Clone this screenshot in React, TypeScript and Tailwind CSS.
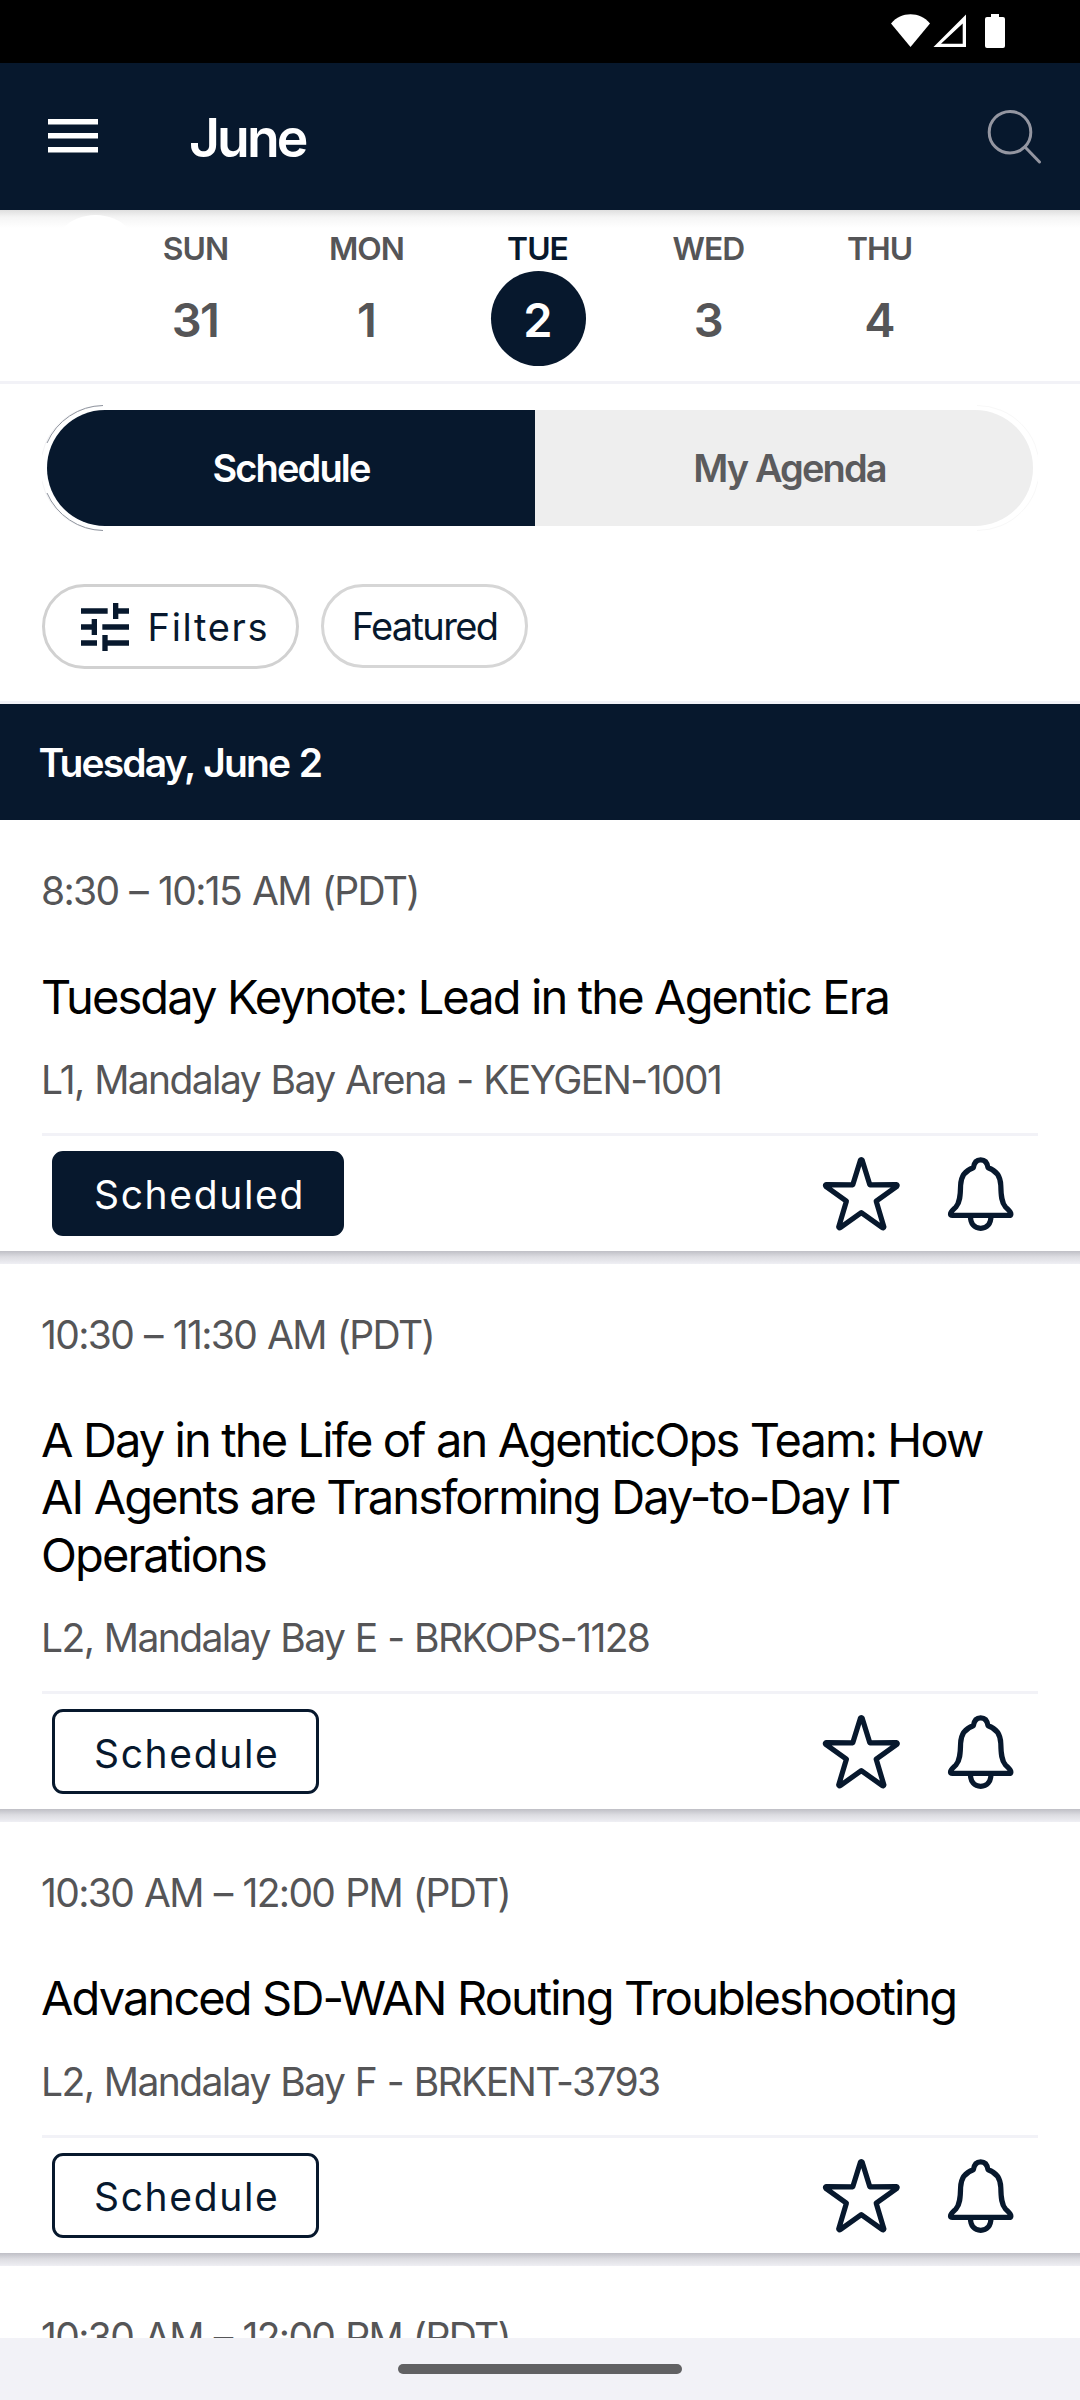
import React, { useState } from 'react';

interface Session { time: string; title: string; place: string; scheduled?: boolean }

const DAYS = [
    { name: 'SUN', date: 31 },
    { name: 'MON', date: 1 },
    { name: 'TUE', date: 2 },
    { name: 'WED', date: 3 },
    { name: 'THU', date: 4 },
];

const SESSIONS: Session[] = [
    { time: '8:30 – 10:15 AM (PDT)', title: 'Tuesday Keynote: Lead in the Agentic Era', place: 'L1, Mandalay Bay Arena - KEYGEN-1001', scheduled: true },
    { time: '10:30 – 11:30 AM (PDT)', title: 'A Day in the Life of an AgenticOps Team: How AI Agents are Transforming Day-to-Day IT Operations', place: 'L2, Mandalay Bay E - BRKOPS-1128' },
    { time: '10:30 AM – 12:00 PM (PDT)', title: 'Advanced SD-WAN Routing Troubleshooting', place: 'L2, Mandalay Bay F - BRKENT-3793' },
    { time: '10:30 AM – 12:00 PM (PDT)', title: '', place: '' },
];

const StatusBar = () => (
    <div className="h-[63px] shrink-0 bg-black flex justify-end pr-[75px] pt-[14px]">
        <svg width="114" height="34" viewBox="0 0 114 34" fill="#fff">
            <path d="M0 9.5C5.5 3 12 .2 19.5 .2S33.500 3 39 9.500L19.500 33Z" />
            <path d="M75 .5V33H42.500ZM71.700 9.500L50 29.700H71.700Z" fillRule="evenodd" />
            <path d="M100 0h8v3h4a2 2 0 0 1 2 2v27a2 2 0 0 1-2 2H96a2 2 0 0 1-2-2V5a2 2 0 0 1 2-2h4Z" />
        </svg>
    </div>
);

const Header = () => (
    <header className="h-[147px] shrink-0 bg-[#07182d] flex items-center pl-[48px] pr-[38px]">
        <svg className="-mt-px" width="50" height="34" viewBox="0 0 50 34" fill="#fff">
            <path d="M0 0h50v5.600H0ZM0 14h50v5.600H0ZM0 28h50v5.600H0Z" />
        </svg>
        <h1 className="ml-[91px] pt-[3px] text-[53.500px] font-semibold text-white tracking-[-0.055em]">June</h1>
        <svg className="ml-auto" width="55" height="55" viewBox="0 0 55 55" fill="none" stroke="#9496a1" strokeWidth="3" strokeLinecap="round">
            <circle cx="23" cy="23.200" r="20.800" />
            <path d="M38 38L52.500 53" />
        </svg>
    </header>
);

const Star = () => (
    <svg width="80" height="76" viewBox="0 0 80 76" fill="none" stroke="#07182d" strokeWidth="5.200" strokeLinejoin="round">
        <path d="M39.400 4.200Q40.300 2.800 41.200 4.200L48.800 28.800L75 28.600Q77 29.200 75.800 30.400L55.200 45.200L62.900 71Q62.700 72.600 61 71.400L40.300 56.600L19.600 71.400Q17.900 72.600 17.700 71L25.400 45.200L4.800 30.400Q3.600 29.200 5.600 28.600L31.800 28.800Z" />
    </svg>
);

const Bell = () => (
    <svg width="70" height="76" viewBox="0 0 70 76" fill="none" stroke="#07182d" strokeWidth="5.200" strokeLinejoin="round">
        <path d="M27.400 11.800C28 7 30.500 3.800 34.700 3.800S41.400 7 42 11.800C50.500 14.500 54.500 21 54.800 29.500C55 40 55.500 46.500 59.500 51C63 54.500 65 56 64.900 58Q64.800 59.400 63 59.400H6.400Q4.600 59.400 4.500 58C4.400 56 6.400 54.500 9.900 51C13.900 46.500 14.400 40 14.600 29.500C14.900 21 18.900 14.500 27.400 11.800Z" />
        <path d="M24.400 60C24.400 68 28.500 72.300 34.700 72.300S45 68 45 60" />
    </svg>
);

const Tune = () => (
    <svg width="64" height="64" viewBox="0 0 24 24" fill="#07182d">
        <path d="M3 17v2h6v-2H3zM3 5v2h10V5H3zm10 16v-2h8v-2h-8v-2h-2v6h2zM7 9v2H3v2h4v2h2V9H7zm14 4v-2H11v2h10zm-6-4h2V7h4V5h-4V3h-2v6z" />
    </svg>
);

const DayStrip = ({ active, onPick }: { active: number; onPick: (d: number) => void }) => (
    <div className="relative h-[174px] shrink-0 border-b-[3px] border-[#f2f2f7] pt-[18px]">
        <div className="absolute inset-x-0 top-0 h-[18px] bg-gradient-to-b from-[#dfdfdf] via-[#f5f5f5] via-40% to-white" />
        <div className="absolute left-[48px] top-[5px] w-[95px] h-[95px] rounded-full bg-white" />
        <div className="relative flex pl-[110.500px]">
            {DAYS.map(d => (
                <button key={d.date} onClick={() => onPick(d.date)} className="w-[171px] flex flex-col items-center gap-[3px]">
                    <span className={`h-[40px] leading-[41px] pr-px text-[31.800px] font-[560] tracking-[-0.03em] ${d.date === active ? 'text-[#07182d]' : 'text-[#555557]'}`}>{d.name}</span>
                    <span className={`w-[95px] h-[95px] rounded-full flex items-center justify-center pt-[3px] pr-[2px] text-[47px] font-[580] tracking-[-0.035em] ${d.date === active ? 'bg-[#07182d] text-white' : 'text-[#555557]'}`}>{d.date}</span>
                </button>
            ))}
        </div>
    </div>
);

const Segments = () => (
    <div className="relative mt-[26px] mx-[47px] h-[116px] flex text-[38px] font-semibold tracking-[-0.049em]">
        <svg className="absolute -left-[5px] -top-[5px]" width="62" height="126" viewBox="0 0 62 126" fill="none">
            <path d="M61 .5A62.500 62.500 0 0 0 61 125.500" stroke="#f3f3f5" />
            <path d="M61 .5A62.500 62.500 0 0 0 5 38M5 88A62.500 62.500 0 0 0 61 125.500" stroke="#8f949e" />
        </svg>
        <svg className="absolute -right-[5px] -top-[5px]" width="62" height="126" viewBox="0 0 62 126" fill="none">
            <path d="M1 .5A62.500 62.500 0 0 1 1 125.500" stroke="#f8f8f8" />
        </svg>
        <button className="w-[488px] rounded-l-full bg-[#07182d] text-white">Schedule</button>
        <button className="flex-1 pl-[11px] rounded-r-full bg-[#eeeeee] text-[#5b5b5d]">My Agenda</button>
    </div>
);

const SessionCard = ({ s }: { s: Session }) => (
    <div className="shrink-0">
        <div className="bg-white px-[42px] pt-[46px] pb-[15px]">
            <p className="-ml-px h-[50px] leading-[50px] text-[39px] tracking-[-0.042em] [word-spacing:1.500px] text-[#555557]">{s.time}</p>
            <h2 className="-ml-px mt-[51.500px] pr-[20px] min-h-[57.300px] text-[47px] leading-[57.300px] tracking-[-0.040em] text-black">{s.title}</h2>
            <p className="-ml-px mt-[30px] h-[50px] leading-[50px] text-[39px] tracking-[-0.041em] [word-spacing:1.200px] text-[#555557]">{s.place}</p>
            <div className="mt-[28.200px] h-[3px] bg-[#f2f2f7]" />
            <div className="mt-[15px] h-[85px] flex items-center gap-[45px] pl-[10px] pr-[22px]">
                <button className={`mr-auto h-[85px] rounded-[11px] border-[3px] border-[#07182d] pt-[4px] pl-[39px] text-left text-[39px] tracking-[1.650px] ${s.scheduled ? 'w-[292px] bg-[#07182d] text-white' : 'w-[267px] text-[#07182d]'}`}>
                    {s.scheduled ? 'Scheduled' : 'Schedule'}
                </button>
                <div className="flex gap-[45px] pt-px">
                    <Star />
                    <Bell />
                </div>
            </div>
        </div>
        <div className="h-[12.700px] bg-gradient-to-b from-[#bfbfc6] via-[#dcdce1] via-45% to-[#efeff4]" />
    </div>
);

export default function App() {
    const [day, setDay] = useState(2);

    return (
        <div className="w-[1080px] h-[2400px] overflow-hidden flex flex-col bg-white font-['Inter',sans-serif]">
            <StatusBar />
            <Header />
            <DayStrip active={day} onPick={setDay} />
            <Segments />

            {/* Filter chips */}
            <div className="mt-[58px] mb-[32px] pl-[42px] h-[85px] shrink-0 flex items-start gap-[22px] text-[38px] text-[#07182d]">
                <button className="w-[257px] h-[85px] rounded-full border-[3px] border-[#d1d1d1] flex items-center pl-[28px]">
                    <Tune />
                    <span className="ml-[10.500px] pt-[2px] tracking-[1.700px]">Filters</span>
                </button>
                <button className="w-[207px] h-[84px] rounded-full border-[3px] border-[#d6d6d6] tracking-[-0.043em]">Featured</button>
            </div>

            <div className="h-[119px] shrink-0 border-t-[3px] border-[#f2f2f7] bg-[#07182d] flex items-center pl-[38.500px] pt-[2px] text-[39px] font-semibold text-white tracking-[-0.048em] [word-spacing:1.500px]">
                Tuesday, June 2
            </div>

            {/* Session list */}
            <div className="flex-1 min-h-0 overflow-hidden flex flex-col">
                {SESSIONS.map((s, i) => <SessionCard key={i} s={s} />)}
            </div>

            <div className="h-[62px] shrink-0 bg-[#f2f2f7] flex justify-center pt-[26px]">
                <div className="w-[284px] h-[10px] rounded-full bg-[#616163]" />
            </div>
        </div>
    );
}
